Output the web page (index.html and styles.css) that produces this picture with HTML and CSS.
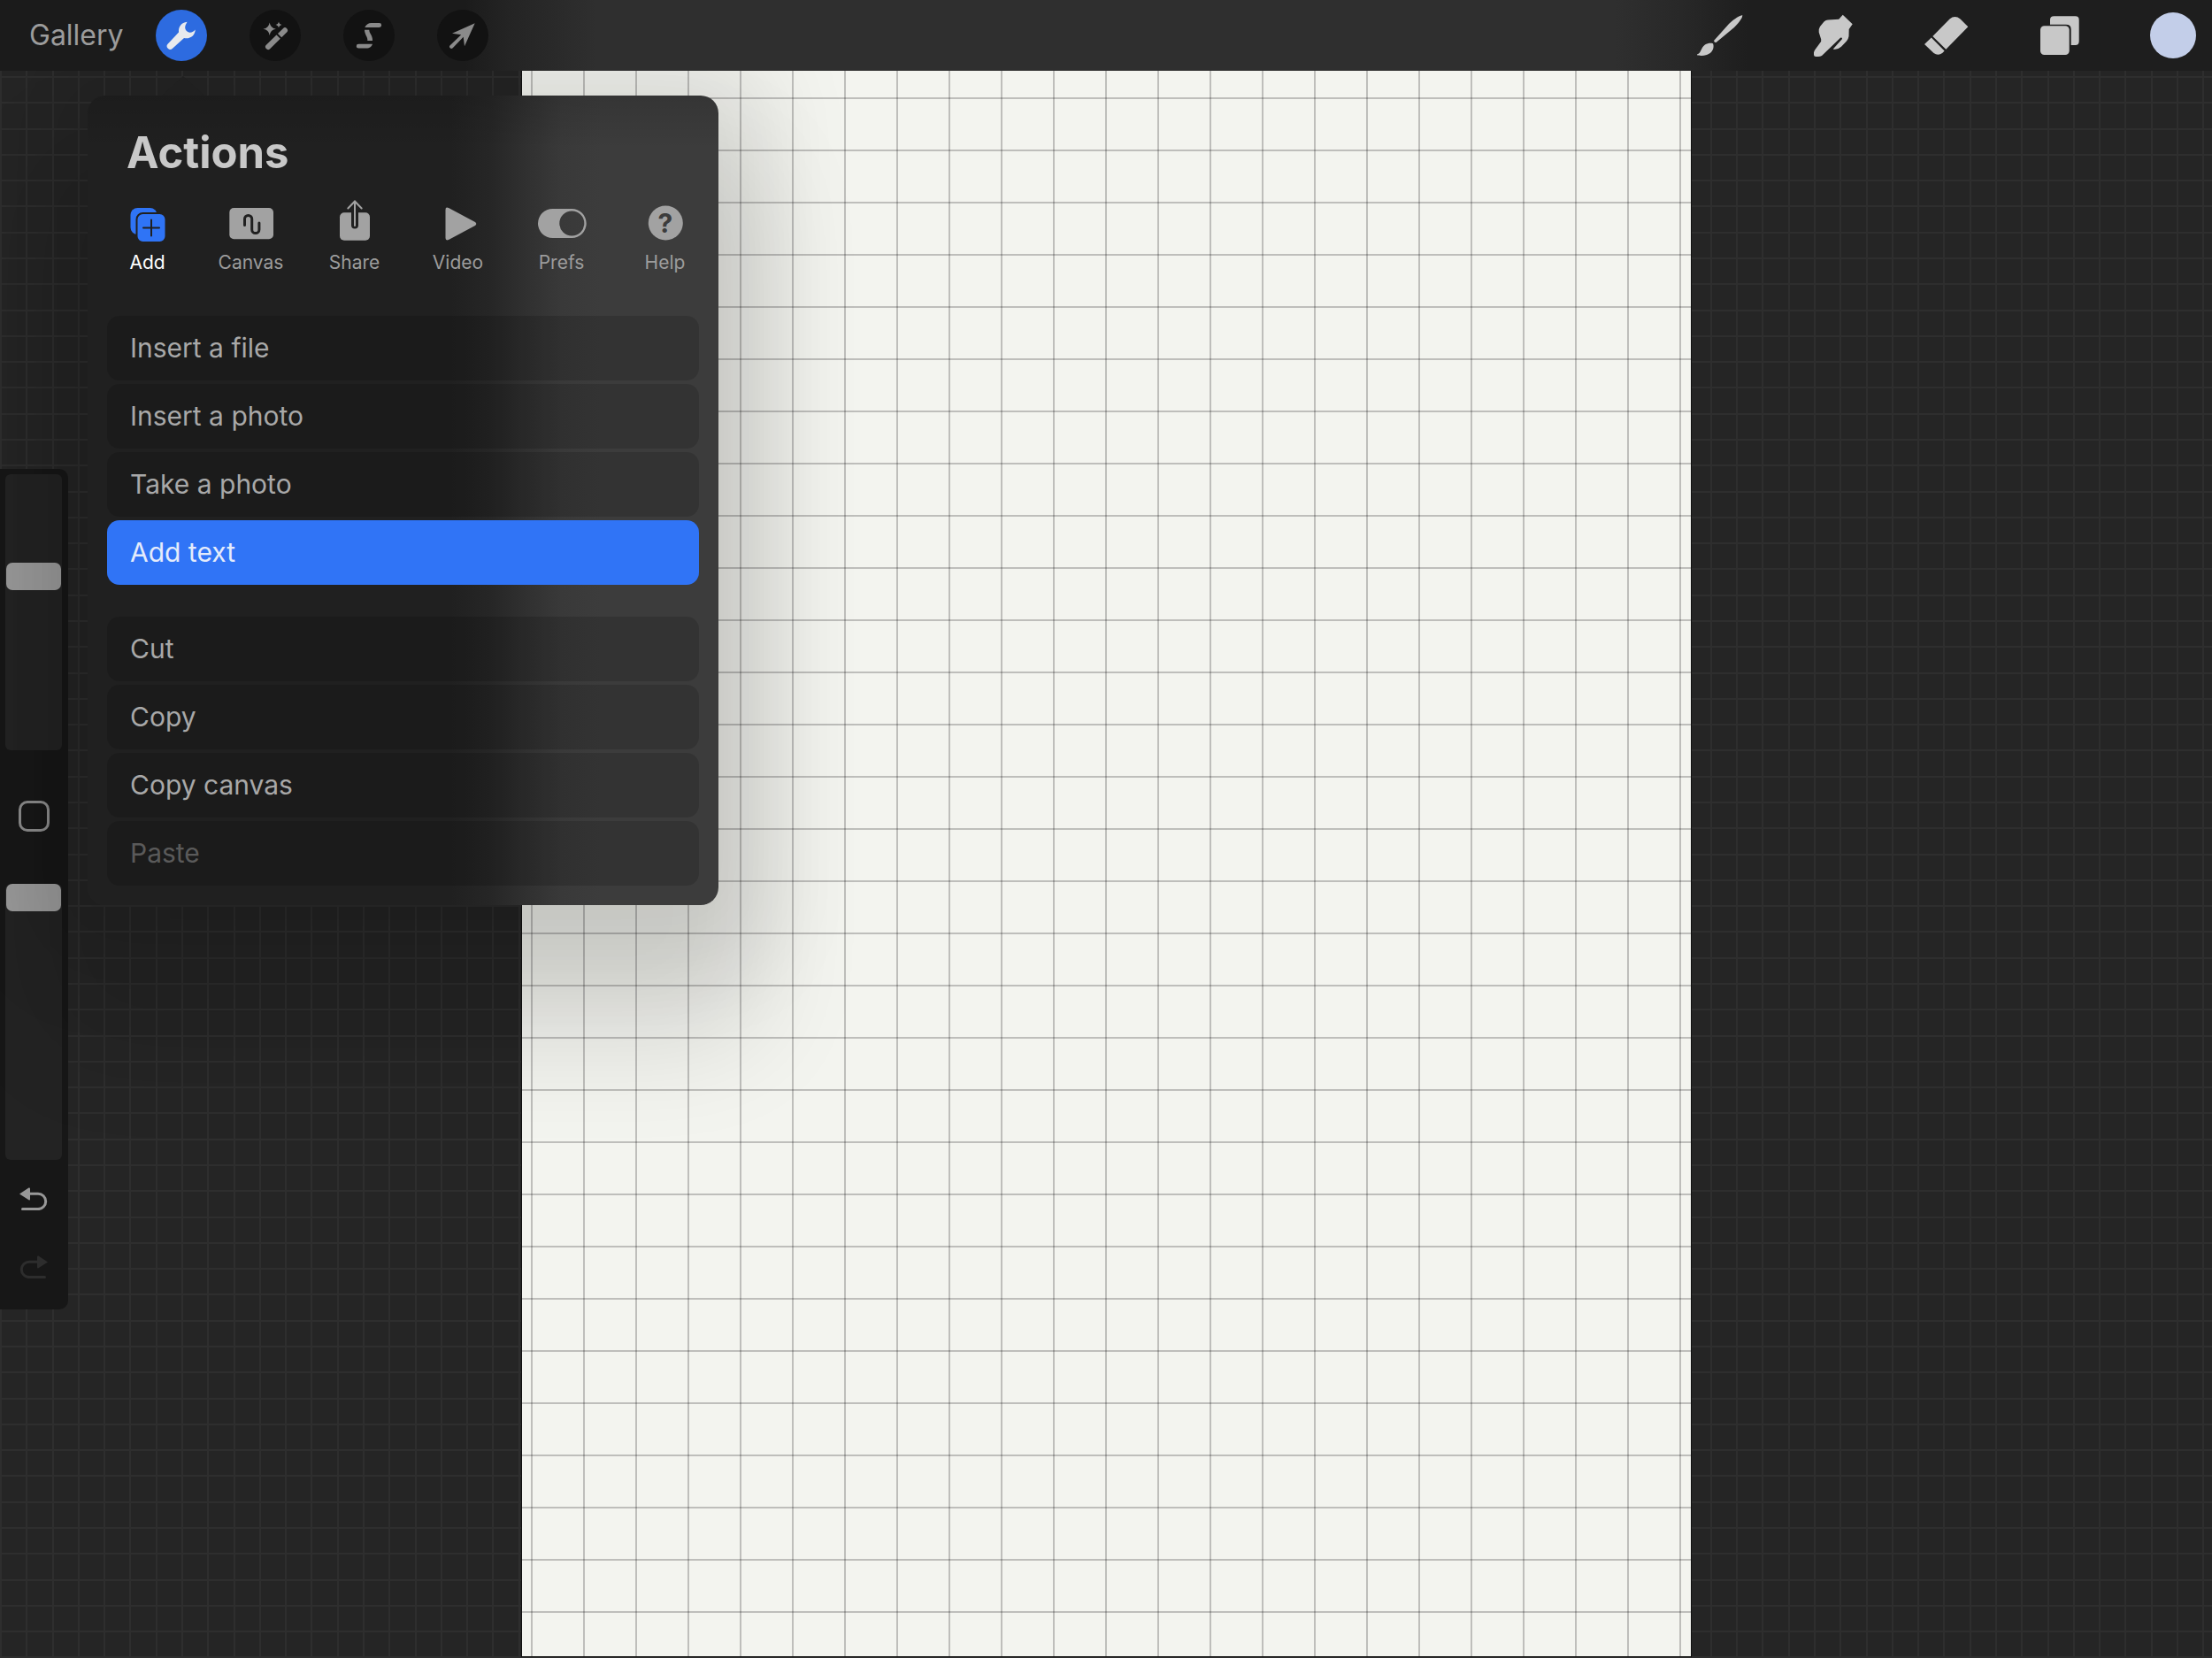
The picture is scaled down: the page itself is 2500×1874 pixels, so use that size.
FILE: index.html
```html
<!DOCTYPE html>
<html lang="en">
<head>
<meta charset="utf-8">
<meta name="viewport" content="width=device-width, initial-scale=1">
<title>Canvas</title>
<link rel="stylesheet" href="styles.css">
</head>
<body>
<header class="toolbar">
  <nav class="tools" aria-label="Editing">
    <a class="gallery" href="#gallery">Gallery</a>
    <button class="round active" aria-label="Actions">
      <svg viewBox="0 0 58 58"><path d="M35.500 13.700C29 14.500 25.500 19 26 25.500L13.800 38.600a3.600 3.600 0 0 0 5.200 5.200L32 32C38.500 33.500 44.500 29.500 44.700 22.500C43 24.500 40 26.500 37.500 25.500C34 24.500 32.500 21 33.500 18C34 16 35 15 35.500 13.700Z"/></svg>
    </button>
    <button class="round" aria-label="Adjustments">
      <svg viewBox="0 0 58 58"><path d="M22.700 14.500Q23.600 20.800 29.900 21.700Q23.600 22.600 22.700 28.900Q21.800 22.600 15.500 21.700Q21.800 20.800 22.700 14.500ZM33 13.500Q33.500 16.500 36.500 17Q33.500 17.500 33 20.500Q32.500 17.500 29.500 17Q32.500 16.500 33 13.500Z"/><path class="wand" d="M40 23.300L21 42"/><path class="slit" d="M30.500 27L36.500 33"/></svg>
    </button>
    <button class="round" aria-label="Selection">
      <svg viewBox="0 0 58 58"><path d="M24.300 19.900C26 16.500 28.500 15 31.500 15H40.700a2.400 2.400 0 0 1 0 4.900ZM24 22.700H29.300C29 26.500 33.500 29 33 35H27.300C28 31 24 28 24 22.700ZM17.200 38.700H33C32 41.500 30 43.600 26 43.600H17.200a2.400 2.400 0 0 1 0-4.900Z"/></svg>
    </button>
    <button class="round" aria-label="Transform">
      <svg viewBox="0 0 58 58"><path d="M42.700 15.300L17 26.700L27.200 28.300L14.700 40.300a2.100 2.100 0 0 0 3 3L29.700 30.800L31 41.300Z"/></svg>
    </button>
  </nav>
  <nav class="tools painting" aria-label="Painting">
    <button class="paint" aria-label="Brush">
      <svg viewBox="0 0 52 52"><path d="M51.300 3.300C51.500 6 48 11 42 17L21.500 34Q19.500 34.500 19 32L36 13C43 6.500 49 3 51.300 3.300ZM0 47.600C5 46 4 40 9 36.500C12 34.500 16 34.500 18 35.200C20 40 17 46 11 48C7 49.300 2 49 0 48.300Z"/></svg>
    </button>
    <button class="paint" aria-label="Smudge">
      <svg viewBox="0 0 52 52"><path d="M36.700 2.700L47.700 13.300L43.700 19L43.500 27Q43 30 41 32.500L35 38.800Q31 42.500 25.700 41.500L36 30Q36 28 34 28.700L13 49Q11 50 9 50H6.500Q4 50 4 47.500V45.500Q4.200 43.500 5.500 42L11 34.500Q12.700 32.500 12.200 30.500L9.700 22.500Q9 19 11 16L15.500 10.500Q17.500 8.700 20 8.600L32.300 7.700Z"/></svg>
    </button>
    <button class="paint" aria-label="Erase">
      <svg viewBox="0 0 52 52"><path d="M10.300 27L29.500 7.500Q35.500 2.700 41.500 7.500L50.300 16.300L25.300 41.700ZM8.800 28.500L23.600 43.500L21.500 45.700Q16.500 49.500 11.500 46L1 36Z"/></svg>
    </button>
    <button class="paint" aria-label="Layers">
      <svg viewBox="0 0 52 52"><path d="M15 13.700V8.500Q15 4.300 19.500 4.300H43.500Q47.700 4.300 47.700 8.500V32.500Q47.700 37 43.500 37H38.700V19Q38.700 13.700 33 13.700Z"/><rect x="4" y="15.300" width="32.700" height="32.700" rx="4.500"/></svg>
    </button>
    <button class="paint swatch" aria-label="Colour"></button>
  </nav>
</header>

<main class="workspace">
  <aside class="sidebar" aria-label="Brush settings">
    <input class="slider" type="range" min="0" max="281" value="181" aria-label="Brush size">
    <button class="modify" aria-label="Modify"></button>
    <input class="slider" type="range" min="0" max="281" value="281" aria-label="Brush opacity">
    <button class="history" aria-label="Undo">
      <svg viewBox="0 0 32 26"><path d="M0 7.500L10.500 0.500Q12 0 12 1.500V13.500Q12 15 10.500 14.200Z"/><path class="curve" d="M10 7.200H21a8.700 8.700 0 0 1 0 17.400H3.500"/></svg>
    </button>
    <button class="history" aria-label="Redo" disabled>
      <svg viewBox="0 0 32 26"><path d="M32 7.500L21.500 0.500Q20 0 20 1.500V13.500Q20 15 21.500 14.200Z"/><path class="curve" d="M22 7.200H11a8.700 8.700 0 0 0 0 17.400H28.500"/></svg>
    </button>
  </aside>
  <section class="canvas" aria-label="Canvas"></section>
</main>

<section class="popover" aria-labelledby="actions-title">
  <h1 class="title" id="actions-title">Actions</h1>
  <div class="tabs">
    <button class="tab current">
      <svg viewBox="0 0 56 48"><rect x="8.500" y="9" width="30" height="30" rx="8"/><rect class="front" x="15.500" y="15" width="33" height="33" rx="7"/><path class="cut thin" d="M32 22.500V40.500M23 31.500H41"/></svg>
      Add
    </button>
    <button class="tab">
      <svg viewBox="0 0 56 48"><rect x="3.300" y="9" width="49.700" height="35.300" rx="5"/><path class="cut" d="M20.500 28.500V21.500a4.100 4.100 0 0 1 8.200 0V33.500a4.100 4.100 0 0 0 8.200 0V26"/></svg>
      Canvas
    </button>
    <button class="tab">
      <svg viewBox="0 0 56 48"><rect x="11" y="14.300" width="34" height="31.400" rx="5"/><path class="cut slot" d="M28 12V28.500"/><path class="stem" d="M28 1.500V29M20.300 9.500L28 1.500L35.700 9.500"/></svg>
      Share
    </button>
    <button class="tab">
      <svg viewBox="0 0 56 48"><path d="M13.500 11Q13.500 7.500 17 9L47 25Q49.500 27 47 29L17 45Q13.500 46.500 13.500 43Z"/></svg>
      Video
    </button>
    <button class="tab">
      <svg viewBox="0 0 56 48"><path fill-rule="evenodd" d="M17.500 10H39.200a16.500 16.500 0 0 1 0 33H17.500a16.500 16.500 0 0 1 0-33ZM39.300 12.500a14 14 0 1 0 0 28a14 14 0 1 0 0-28Z"/></svg>
      Prefs
    </button>
    <button class="tab">
      <svg viewBox="0 0 56 48"><circle cx="28.300" cy="26" r="19.500"/><text class="mark" x="28" y="37" text-anchor="middle">?</text></svg>
      Help
    </button>
  </div>
  <div class="group">
    <button class="row">Insert a file</button>
    <button class="row">Insert a photo</button>
    <button class="row">Take a photo</button>
    <button class="row selected">Add text</button>
  </div>
  <div class="group">
    <button class="row">Cut</button>
    <button class="row">Copy</button>
    <button class="row">Copy canvas</button>
    <button class="row" disabled>Paste</button>
  </div>
</section>
</body>
</html>
```
FILE: styles.css
```css
* { box-sizing: border-box; }

body {
  margin: 0;
  min-height: 100vh;
  display: flex;
  flex-direction: column;
  position: relative;
  overflow-x: hidden;
  background: #252525;
  font-family: Inter, "Liberation Sans", sans-serif;
}

button {
  margin: 0;
  padding: 0;
  border: 0;
  background: none;
  color: inherit;
  font: inherit;
}

svg { display: block; }

/* top bar */
.toolbar {
  position: relative;
  z-index: 3;
  height: 80px;
  padding: 0 18px 0 33px;
  display: flex;
  align-items: center;
  justify-content: space-between;
  background: linear-gradient(90deg, #1b1b1b 21%, #242424 23%, #2f2f2f 27%, #2f2f2f 73%, #282828 76%, #1e1e1e 79%);
}

.tools {
  display: flex;
  align-items: center;
  gap: 38px;
}

.round + .round { margin-left: 10px; }

.painting { gap: 76px; }

.gallery {
  width: 105px;
  color: #9c9c9c;
  font-size: 32px;
  line-height: 40px;
  text-decoration: none;
}

.round {
  width: 58px;
  height: 58px;
  border-radius: 50%;
  background: #121212;
  fill: #8a8a8a;
}

.round.active {
  background: #2d6be0;
  fill: #e8eaee;
}

.wand {
  stroke: #8a8a8a;
  stroke-width: 6;
  stroke-linecap: round;
}

.slit {
  stroke: #121212;
  stroke-width: 2;
}

.paint {
  width: 52px;
  height: 52px;
  fill: #c8c8c8;
}

.swatch {
  border-radius: 50%;
  background: #c3cee9;
}

/* drawing area: each 205px tile of the backdrop holds seven lines */
.workspace {
  flex: 1;
  display: grid;
  grid-template-columns: 590fr 1321fr 589fr;
  background-color: #252525;
  background-image:
    linear-gradient(90deg, #2e2e2e 2px, transparent 2px 29px, #2e2e2e 29px 31px, transparent 31px 59px, #2e2e2e 59px 61px, transparent 61px 88px, #2e2e2e 88px 90px, transparent 90px 117px, #2e2e2e 117px 119px, transparent 119px 146px, #2e2e2e 146px 148px, transparent 148px 176px, #2e2e2e 176px 178px, transparent 178px),
    linear-gradient(#2e2e2e 2px, transparent 2px 29px, #2e2e2e 29px 31px, transparent 31px 59px, #2e2e2e 59px 61px, transparent 61px 88px, #2e2e2e 88px 90px, transparent 90px 117px, #2e2e2e 117px 119px, transparent 119px 146px, #2e2e2e 146px 148px, transparent 148px 176px, #2e2e2e 176px 178px, transparent 178px);
  background-size: 205px 205px;
  background-position: 0 6px;
}

.canvas {
  grid-column: 2;
  margin-bottom: 2px;
  background-color: #f3f4ef;
  background-image:
    linear-gradient(90deg, rgba(0, 0, 0, 0.22) 2px, transparent 2px),
    linear-gradient(rgba(0, 0, 0, 0.22) 2px, transparent 2px);
  background-size: 59px 59px;
  background-position: 10px 30px;
  box-shadow: 0 0 0 1px #111111;
}

/* side bar */
.sidebar {
  position: relative;
  z-index: 2;
  align-self: start;
  justify-self: start;
  width: 77px;
  margin-top: 24vh;
  padding: 6px 7px 35px 6px;
  display: flex;
  flex-direction: column;
  align-items: center;
  border-radius: 0 10px 10px 0;
  background: #171717;
}

.slider {
  appearance: none;
  writing-mode: vertical-lr;
  direction: rtl;
  width: 64px;
  height: 312px;
  margin: 0;
  border-radius: 6px;
  background: #232323;
}

.slider::-webkit-slider-thumb {
  appearance: none;
  width: 62px;
  height: 31px;
  border-radius: 7px;
  background: #9b9b9b;
}

.modify {
  width: 35px;
  height: 35px;
  margin: 57px 0 59px;
  border: 3px solid #8c8c8c;
  border-radius: 10px;
}

.history {
  width: 32px;
  height: 26px;
  margin-top: 31px;
  fill: #989898;
  stroke: #989898;
}

.history + .history { margin-top: 51px; }

.history:disabled {
  fill: #2d2d2d;
  stroke: #2d2d2d;
}

.history path { stroke-width: 0; }

.history .curve {
  fill: none;
  stroke-width: 3;
  stroke-linecap: round;
}

/* actions menu */
.popover {
  position: absolute;
  z-index: 2;
  top: 108px;
  left: 99px;
  width: 713px;
  padding: 34px 22px 22px;
  border-radius: 20px;
  background:
    linear-gradient(rgba(0, 0, 0, 0.12), transparent 60px),
    linear-gradient(90deg, #202020 410px, #262626 455px, #303030 495px, #393939 535px, #3c3c3c 580px);
  box-shadow:
    0 10px 100px 60px rgba(0, 0, 0, 0.09),
    0 110px 120px 50px rgba(0, 0, 0, 0.11);
}

.popover::before {
  content: "";
  position: absolute;
  top: -22px;
  left: 84px;
  width: 48px;
  height: 22px;
  background: #202020;
  clip-path: polygon(50% 0, 100% 100%, 0 100%);
}

.title {
  margin: 0 22px;
  color: #c8c8c8;
  font-size: 49px;
  line-height: 62px;
  font-weight: 700;
}

.tabs {
  margin: 22px -20px 0 -13px;
  display: grid;
  grid-template-columns: repeat(6, 1fr);
}

.tab {
  display: flex;
  flex-direction: column;
  align-items: center;
  gap: 9px;
  color: #9c9c9c;
  fill: #a2a2a2;
  font-size: 21px;
  line-height: 28px;
}

.tab svg {
  width: 56px;
  height: 48px;
}

.tab.current {
  color: #ffffff;
  fill: #2f74f6;
}

.front {
  stroke: #202020;
  stroke-width: 2;
}

.cut {
  fill: none;
  stroke: #202020;
  stroke-width: 3;
  stroke-linecap: round;
}

.cut.thin { stroke-width: 2; }

.cut.slot { stroke-width: 8; }

.stem {
  fill: none;
  stroke: #a2a2a2;
  stroke-width: 2;
  stroke-linecap: round;
}

.mark {
  fill: #3c3c3c;
  font-size: 30px;
  font-weight: 700;
}

.group {
  margin-top: 36px;
  display: flex;
  flex-direction: column;
  gap: 4px;
}

.tabs + .group { margin-top: 46px; }

.row {
  height: 73px;
  padding: 0 26px 2px;
  border-radius: 14px;
  background: rgba(0, 0, 0, 0.15);
  color: #a8a8a8;
  font-size: 30px;
  line-height: 40px;
  text-align: left;
}

.row.selected {
  background: #3074f6;
  color: #e4ebfb;
}

.row:disabled { color: #5a5a5a; }
```
